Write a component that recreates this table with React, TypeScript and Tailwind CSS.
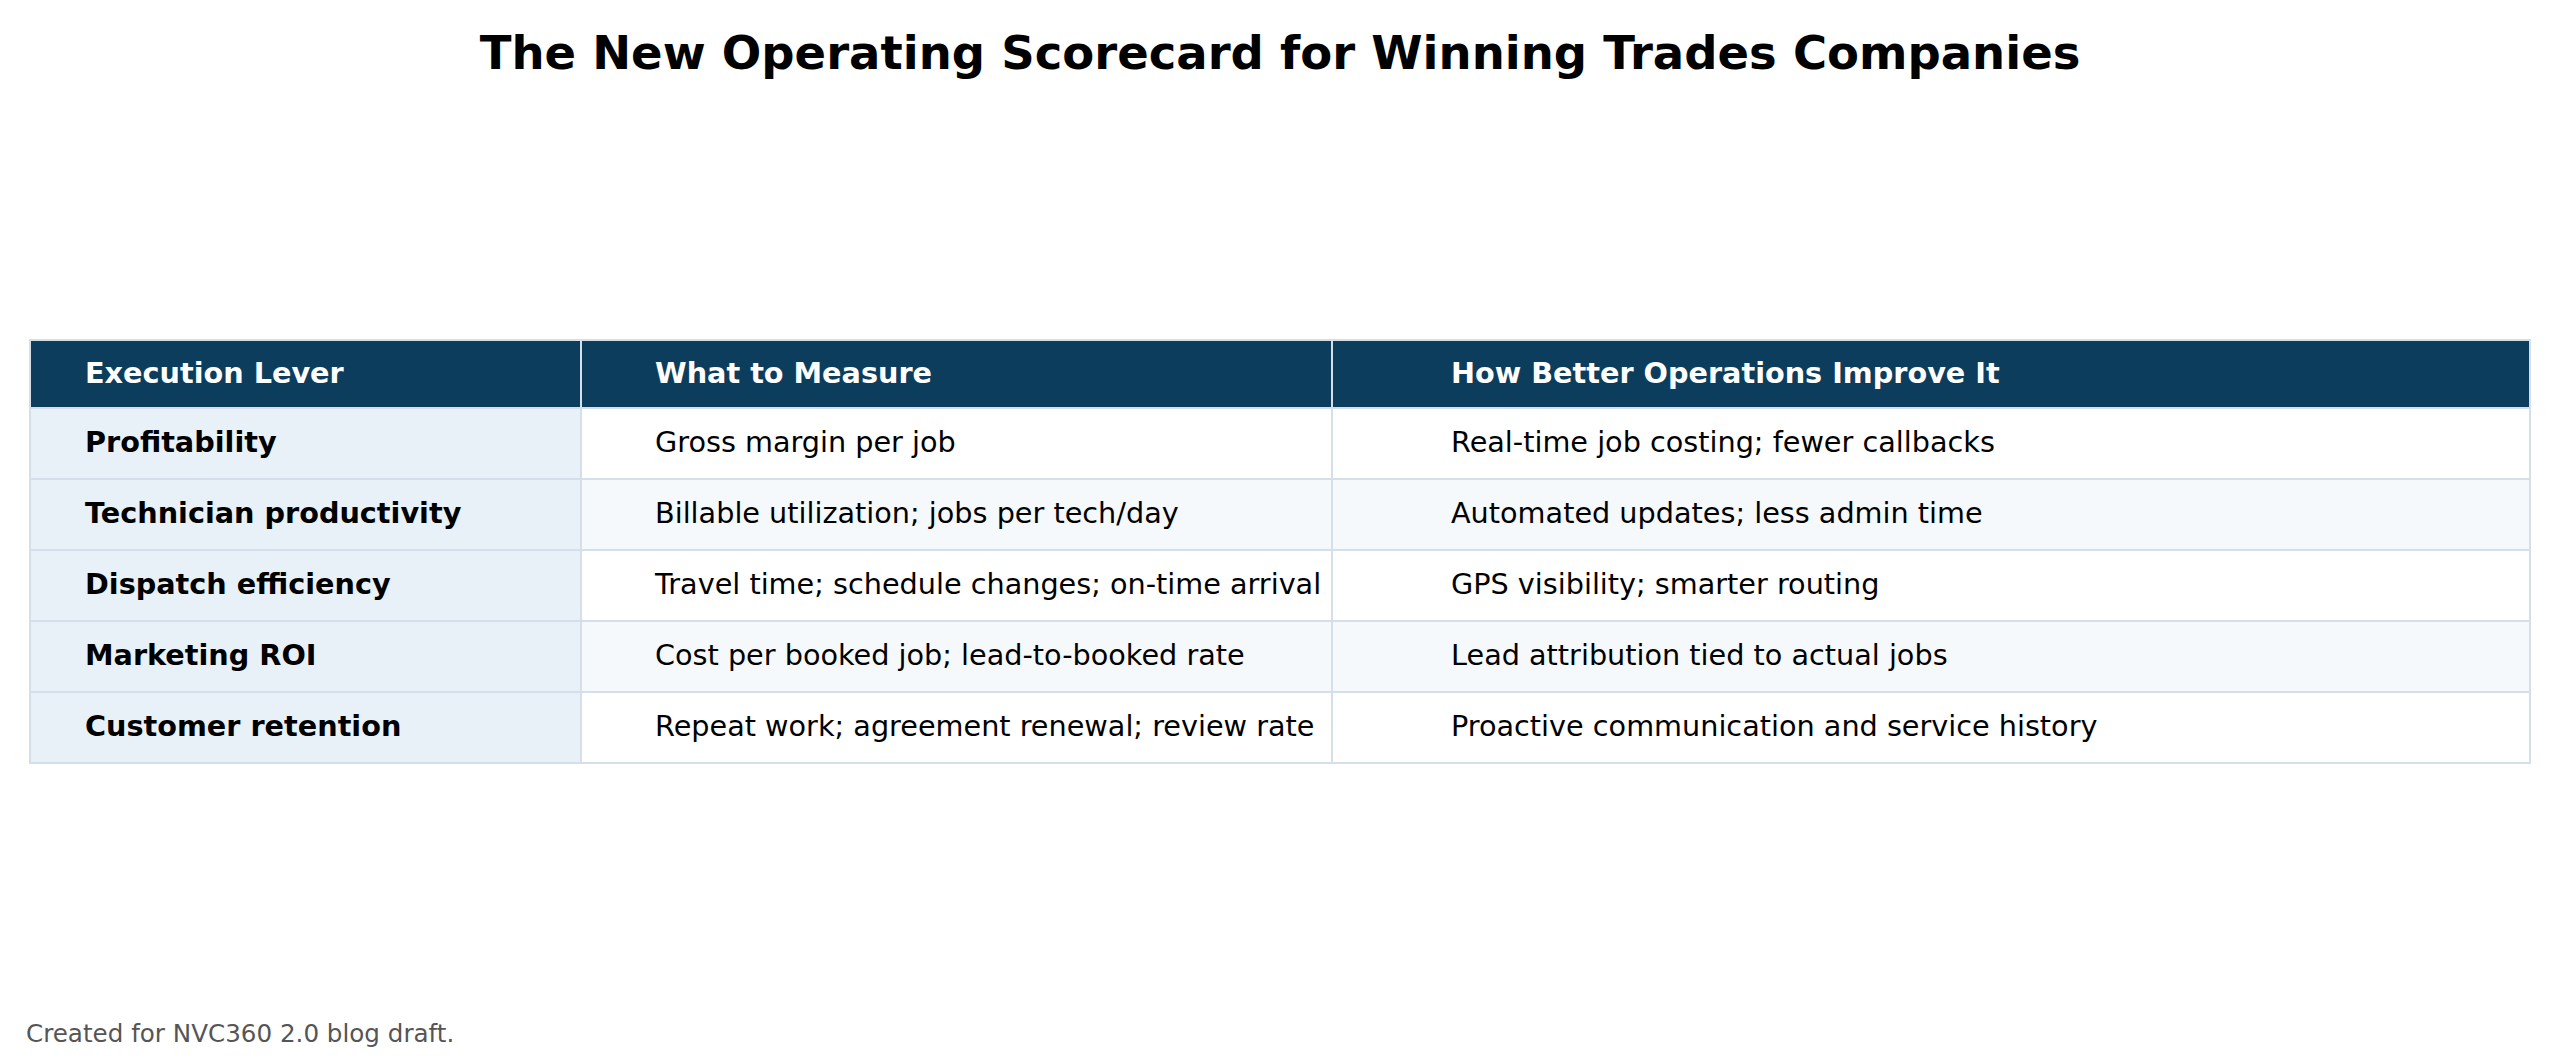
import React from "react";

const rows = [
  ["Profitability", "Gross margin per job", "Real-time job costing; fewer callbacks"],
  ["Technician productivity", "Billable utilization; jobs per tech/day", "Automated updates; less admin time"],
  ["Dispatch efficiency", "Travel time; schedule changes; on-time arrival", "GPS visibility; smarter routing"],
  ["Marketing ROI", "Cost per booked job; lead-to-booked rate", "Lead attribution tied to actual jobs"],
  ["Customer retention", "Repeat work; agreement renewal; review rate", "Proactive communication and service history"],
];

const App = () => {
  return (
    <div
      className="w-[2560px] h-[1063px] bg-white flex flex-col text-black"
      style={{ fontFamily: '"DejaVu Sans", sans-serif' }}
    >
      {/* TITLE */}
      <h1 className="text-center font-bold text-[46.5px] leading-none pt-[30px]">
        The New Operating Scorecard for Winning Trades Companies
      </h1>

      {/* TABLE */}
      <div className="mt-[262px] px-[29px]">
        <table className="w-full border-collapse table-fixed text-[28.7px]">
          <colgroup>
            <col className="w-[551px]" />
            <col className="w-[751px]" />
            <col />
          </colgroup>
          <thead>
            <tr className="h-[68px] bg-[#0c3d5d] text-white font-bold">
              <th className="border-2 border-[#d5dfea] text-left pl-[54px] font-bold">Execution Lever</th>
              <th className="border-2 border-[#d5dfea] text-left pl-[73px] font-bold">What to Measure</th>
              <th className="border-2 border-[#d5dfea] text-left pl-[118px] font-bold">How Better Operations Improve It</th>
            </tr>
          </thead>
          <tbody>
            {rows.map((r, i) => (
              <tr key={r[0]} className={i % 2 === 1 ? "h-[71px] bg-[#f5f9fc]" : "h-[71px] bg-white"}>
                <td className="border-2 border-[#d5dfea] bg-[#e9f1f8] pl-[54px] font-bold">{r[0]}</td>
                <td className="border-2 border-[#d5dfea] pl-[73px]">{r[1]}</td>
                <td className="border-2 border-[#d5dfea] pl-[118px]">{r[2]}</td>
              </tr>
            ))}
          </tbody>
        </table>
      </div>

      {/* FOOTER */}
      <div className="mt-auto pl-[26px] pb-[10px] text-[24.6px] text-[#555555]">
        Created for NVC360 2.0 blog draft.
      </div>
    </div>
  );
};

export default App;
